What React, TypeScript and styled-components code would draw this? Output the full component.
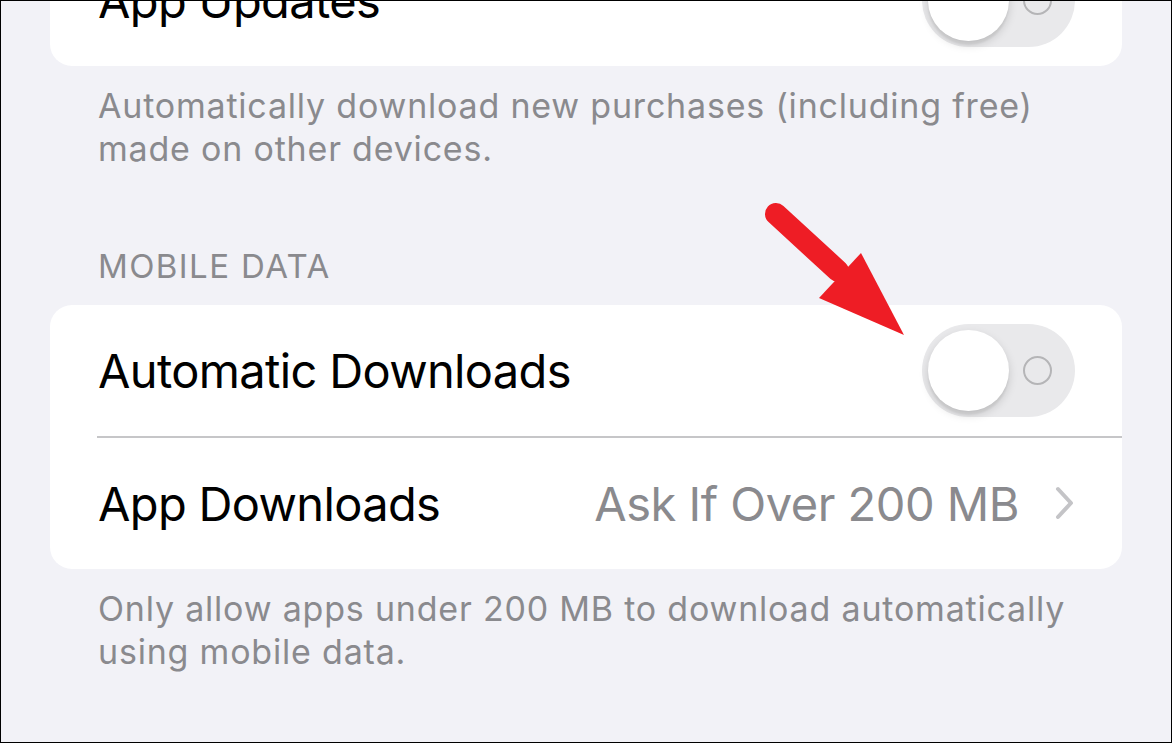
import styled, { createGlobalStyle } from "styled-components";

const GlobalStyle = createGlobalStyle`
  body {
    margin: 0;
    font-family: Inter, "Noto Sans", sans-serif;
    -webkit-font-smoothing: antialiased;
  }
`;

const Screen = styled.div`
  position: relative;
  width: 1172px;
  height: 743px;
  box-sizing: border-box;
  border: 1px solid #000;
  background: #f2f2f7;
  overflow: hidden;
`;

const Content = styled.div`
  margin-top: -66px;
  padding: 0 49px;
`;

const Group = styled.div`
  background: #fff;
  border-radius: 22px;
  overflow: hidden;
`;

const Row = styled.div`
  height: 131px;
  display: flex;
  align-items: center;
  padding: 0 47px 0 48px;
`;

const Divider = styled.div`
  height: 1.5px;
  margin-left: 47px;
  background: #c6c6c8;
`;

const Label = styled.div`
  flex: 1;
  font-size: 47px;
  color: #000;
  letter-spacing: -0.65px;
`;

const Value = styled.div`
  font-size: 47px;
  color: #8a8a8e;
  letter-spacing: -0.5px;
  margin-right: 36px;
`;

const Footer = styled.p`
  margin: 18px 0 0;
  padding: 0 48px;
  font-size: 34px;
  line-height: 43px;
  letter-spacing: 0.8px;
  color: #8a8a8e;
`;

const Header = styled.div`
  margin: 76px 0 19px;
  padding: 0 48px;
  font-size: 33px;
  line-height: 40px;
  letter-spacing: 1.4px;
  color: #8a8a8e;
`;

const Track = styled.div`
  position: relative;
  width: 153px;
  height: 93px;
  border-radius: 47px;
  background: #e9e9eb;
  flex-shrink: 0;
`;

const Thumb = styled.div`
  position: absolute;
  left: 6px;
  top: 6px;
  width: 81px;
  height: 81px;
  border-radius: 50%;
  background: #fff;
  box-shadow: 0 4px 10px rgba(0, 0, 0, 0.15), 0 4px 2px rgba(0, 0, 0, 0.05);
`;

const OffMark = styled.div`
  position: absolute;
  left: 101px;
  top: 32px;
  width: 25px;
  height: 25px;
  border-radius: 50%;
  border: 2.5px solid #b5b5b7;
`;

const Arrow = styled.svg`
  position: absolute;
  left: 755px;
  top: 195px;
`;

const Toggle = () => (
  <Track>
    <Thumb />
    <OffMark />
  </Track>
);

const Chevron = () => (
  <svg width="20" height="34" viewBox="0 0 20 34">
    <path
      d="M3 3 L16 17 L3 31"
      fill="none"
      stroke="#c4c4c7"
      strokeWidth="4"
      strokeLinecap="round"
      strokeLinejoin="round"
    />
  </svg>
);

export default function App() {
  return (
    <Screen>
      <GlobalStyle />
      <Content>
        <Group>
          <Row>
            <Label>App Updates</Label>
            <Toggle />
          </Row>
        </Group>
        <Footer>
          Automatically download new purchases (including free)
          <br />
          made on other devices.
        </Footer>

        <Header>MOBILE DATA</Header>
        <Group>
          <Row>
            <Label>Automatic Downloads</Label>
            <Toggle />
          </Row>
          <Divider />
          <Row>
            <Label>App Downloads</Label>
            <Value>Ask If Over 200 MB</Value>
            <Chevron />
          </Row>
        </Group>
        <Footer>
          Only allow apps under 200 MB to download automatically
          <br />
          using mobile data.
        </Footer>
      </Content>

      <Arrow width="160" height="150" viewBox="0 0 160 150">
        <line
          x1="20"
          y1="18"
          x2="82"
          y2="75"
          stroke="#ee1d25"
          strokeWidth="22"
          strokeLinecap="round"
        />
        <polygon points="63,102 105,57 148,139" fill="#ee1d25" />
      </Arrow>
    </Screen>
  );
}
